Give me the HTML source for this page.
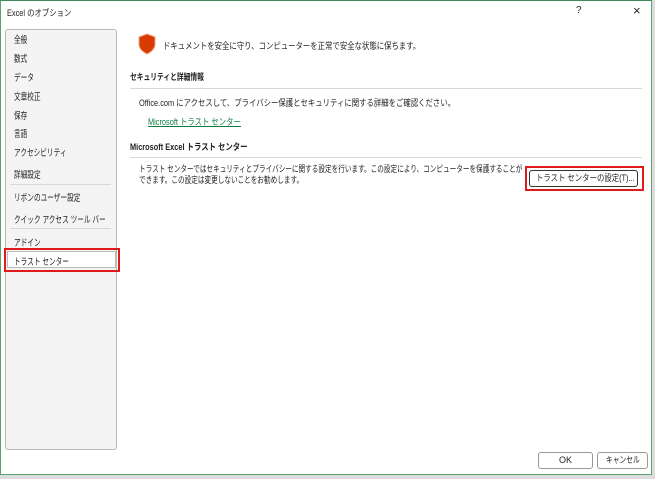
<!DOCTYPE html>
<html><head><meta charset="utf-8"><style>
body{margin:0;width:655px;height:479px;background:#dcdcdc;font-family:"Liberation Sans","Noto Sans CJK JP",sans-serif;font-size:9px;color:#222;position:relative;overflow:hidden}
.win{position:absolute;left:0;top:0;width:650px;height:473px;background:#fff;border:1px solid #5aa36e;border-top-color:#3c8a55}
.a{position:absolute;white-space:nowrap;transform-origin:0 0}
.s{transform:scaleX(.75)}
.n{font-size:9.5px;transform:scaleX(.7)}
.m{transform:scaleX(.82)}
.nav{position:absolute;left:4px;top:28px;width:110px;height:419px;border:1px solid #b9b9b9;border-radius:3px;background:#f4f4f4}
.sep{position:absolute;height:1px;background:#d8d8d8}
.btn{position:absolute;border:1px solid #9a9a9a;border-radius:3px;background:#fff;font-size:9px;white-space:nowrap;overflow:hidden}
</style></head><body>
<div class="win">
<div class="a m" style="left:6px;top:5px">Excel のオプション</div>
<div class="a" style="left:575px;top:4px;font-size:10px">?</div>
<div class="a" style="left:632px;top:2px;font-size:13px">×</div>
<div class="nav"></div>
<div class="a n" style="left:13px;top:31px">全般</div>
<div class="a n" style="left:13px;top:50px">数式</div>
<div class="a n" style="left:13px;top:69px">データ</div>
<div class="a n" style="left:13px;top:88px">文章校正</div>
<div class="a n" style="left:13px;top:107px">保存</div>
<div class="a n" style="left:13px;top:125px">言語</div>
<div class="a n" style="left:13px;top:144px">アクセシビリティ</div>
<div class="a n" style="left:13px;top:166px">詳細設定</div>
<div class="sep" style="left:9px;top:183px;width:101px"></div>
<div class="a n" style="left:13px;top:189px">リボンのユーザー設定</div>
<div class="a n" style="left:13px;top:211px">クイック アクセス ツール バー</div>
<div class="sep" style="left:9px;top:227px;width:101px"></div>
<div class="a n" style="left:13px;top:234px">アドイン</div>
<div class="a" style="left:3px;top:247px;width:112px;height:20px;border:2px solid #e01b1b"></div>
<div class="a" style="left:6px;top:250px;width:107px;height:15px;background:#fff;border:1px solid #bbb"></div>
<div class="a n" style="left:13px;top:253px">トラスト センター</div>
<svg class="a" style="left:136px;top:32px" width="20" height="22" viewBox="0 0 20 22"><path d="M10 1 L18 4 L18 11 C18 16 14 19 10 21 C6 19 2 16 2 11 L2 4 Z" fill="#d83b01" stroke="#f0a080" stroke-width="1"/></svg>
<div class="a m" style="left:162px;top:38px">ドキュメントを安全に守り、コンピューターを正常で安全な状態に保ちます。</div>
<div class="a s" style="left:129px;top:69px;font-weight:bold">セキュリティと詳細情報</div>
<div class="sep" style="left:129px;top:87px;width:512px"></div>
<div class="a m" style="left:138px;top:95px">Office.com にアクセスして、プライバシー保護とセキュリティに関する詳細をご確認ください。</div>
<div class="a m" style="left:147px;top:114px;color:#107c41;text-decoration:underline">Microsoft トラスト センター</div>
<div class="a m" style="left:129px;top:139px;font-weight:bold">Microsoft Excel トラスト センター</div>
<div class="sep" style="left:129px;top:156px;width:512px"></div>
<div class="a" style="left:138px;top:163px;line-height:11px;transform:scaleX(.735)">トラスト センターではセキュリティとプライバシーに関する設定を行います。この設定により、コンピューターを保護することが<br>できます。この設定は変更しないことをお勧めします。</div>
<div class="a" style="left:524px;top:165px;width:115px;height:21px;border:2px solid #e01b1b"></div>
<div class="btn" style="left:528px;top:169px;width:107px;height:15px;line-height:15px;border:1.5px solid #333"><span class="a m" style="left:6px;top:0">トラスト センターの設定(T)...</span></div>
<div class="btn" style="left:537px;top:451px;width:53px;height:15px;line-height:15px;text-align:center">OK</div>
<div class="btn" style="left:596px;top:451px;width:49px;height:15px;line-height:15px"><span class="a s" style="left:8px;top:0">キャンセル</span></div>
</div>
</body></html>
